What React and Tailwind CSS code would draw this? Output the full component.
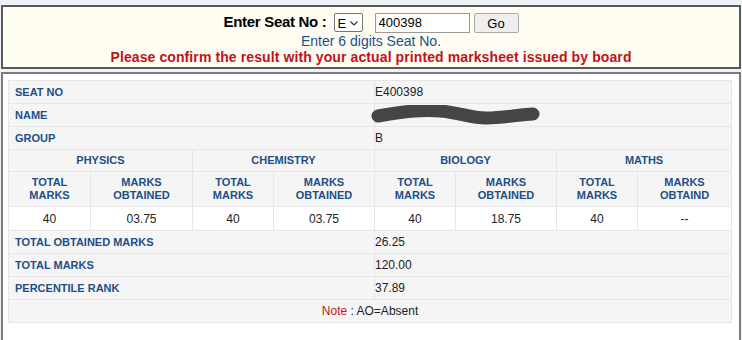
import { useState } from "react";

const subjects = [
  { name: "PHYSICS", total: "40", obtained: "03.75", label: "OBTAINED" },
  { name: "CHEMISTRY", total: "40", obtained: "03.75", label: "OBTAINED" },
  { name: "BIOLOGY", total: "40", obtained: "18.75", label: "OBTAINED" },
  { name: "MATHS", total: "40", obtained: "--", label: "OBTAIND" },
];

const summary = [
  ["TOTAL OBTAINED MARKS", "26.25"],
  ["TOTAL MARKS", "120.00"],
  ["PERCENTILE RANK", "37.89"],
];

// widths of the 8 sub columns (total / obtained per subject)
const cols = ["82px", "102px", "81px", "101px", "81px", "101px", "81px", "94px"];

export default function App() {
  const [seat, setSeat] = useState("400398");
  const [prefix, setPrefix] = useState("E");

  const label = "text-[11px] font-bold text-[#1d4f86]";
  const value = "text-[12px] text-[#222]";
  const cell = "border border-[#e6e6e6]";

  return (
    <div className="w-[742px] h-[340px] overflow-hidden bg-[#eef3f7] pt-[5px] font-['Liberation_Sans',Arial,sans-serif]">
      {/* search box */}
      <div className="mx-[1px] h-[64px] border-2 border-[#5a5a5a] bg-[#fffdf2] flex flex-col items-center pt-[5px]">
        <div className="flex items-center h-[21px]">
          <span className="text-[15px] font-bold text-black mr-[7px] tracking-[-0.3px]">Enter Seat No :</span>
          <div className="relative mr-[12px]">
            <select
              value={prefix}
              onChange={(e) => setPrefix(e.target.value)}
              className="appearance-none h-[19px] w-[29px] border border-[#767676] bg-white text-[13px] pl-[3px] rounded-[2px] block"
            >
              <option>E</option>
              <option>B</option>
            </select>
            <svg
              width="8"
              height="5"
              viewBox="0 0 8 5"
              className="absolute right-[5px] top-[8px] pointer-events-none"
            >
              <path d="M0.5 0.5 L4 4 L7.5 0.5" stroke="#333" strokeWidth="1.2" fill="none" />
            </svg>
          </div>
          <input
            value={seat}
            onChange={(e) => setSeat(e.target.value)}
            className="h-[20px] w-[95px] border border-[#999] bg-white text-[13px] px-[3px] mr-[4px] outline-none"
          />
          <button className="h-[20px] w-[45px] border border-[#aaa] bg-[#efefef] text-[13px] rounded-[2px]">Go</button>
        </div>
        <div className="text-[14px] leading-[16px] text-[#1c4f8c]">Enter 6 digits Seat No.</div>
        <div className="text-[14px] leading-[16px] font-bold text-[#c0121b] tracking-[0.1px]">
          Please confirm the result with your actual printed marksheet issued by board
        </div>
      </div>

      {/* result box */}
      <div className="mx-[1px] mt-[3px] h-[300px] border-2 border-b-0 border-[#7a7a7a] bg-white pl-[5px] pt-[6px]">
        <table className="w-[723px] border-collapse table-fixed bg-[#f5f5f5]">
          <colgroup>
            {cols.map((w, i) => (
              <col key={i} style={{ width: w }} />
            ))}
          </colgroup>
          <tbody>
            <tr className="h-[23px]">
              <td colSpan={4} className={`${cell} ${label} pl-[6px]`}>SEAT NO</td>
              <td colSpan={4} className={`${cell} ${value}`}>E400398</td>
            </tr>
            <tr className="h-[23px]">
              <td colSpan={4} className={`${cell} ${label} pl-[6px]`}>NAME</td>
              <td colSpan={4} className={cell}>
                <svg width="172" height="20" viewBox="0 0 172 20" className="block -ml-[4px]">
                  <path
                    d="M7 11 C 30 7, 50 4, 70 6 C 90 8, 100 13, 115 13 C 135 13, 150 9, 162 9"
                    stroke="#454545"
                    strokeWidth="13"
                    strokeLinecap="round"
                    fill="none"
                  />
                </svg>
              </td>
            </tr>
            <tr className="h-[23px]">
              <td colSpan={4} className={`${cell} ${label} pl-[6px]`}>GROUP</td>
              <td colSpan={4} className={`${cell} ${value}`}>B</td>
            </tr>
            <tr className="h-[22px]">
              {subjects.map((s) => (
                <td key={s.name} colSpan={2} className={`${cell} ${label} text-center`}>
                  {s.name}
                </td>
              ))}
            </tr>
            <tr className="h-[35px]">
              {subjects.map((s) => [
                <td key={s.name + "t"} className={`${cell} ${label} text-center leading-[13px]`}>
                  TOTAL<br />MARKS
                </td>,
                <td key={s.name + "o"} className={`${cell} ${label} text-center leading-[13px]`}>
                  MARKS<br />{s.label}
                </td>,
              ])}
            </tr>
            <tr className="h-[24px] bg-white">
              {subjects.map((s) => [
                <td key={s.name + "t"} className={`${cell} ${value} text-center`}>{s.total}</td>,
                <td key={s.name + "o"} className={`${cell} ${value} text-center`}>{s.obtained}</td>,
              ])}
            </tr>
            {summary.map(([k, v]) => (
              <tr key={k} className="h-[23px]">
                <td colSpan={4} className={`${cell} ${label} pl-[6px]`}>{k}</td>
                <td colSpan={4} className={`${cell} ${value}`}>{v}</td>
              </tr>
            ))}
            <tr className="h-[23px]">
              <td colSpan={8} className={`${cell} ${value} text-center`}>
                <span className="text-[#c0121b]">Note</span> : AO=Absent
              </td>
            </tr>
          </tbody>
        </table>
      </div>
    </div>
  );
}
